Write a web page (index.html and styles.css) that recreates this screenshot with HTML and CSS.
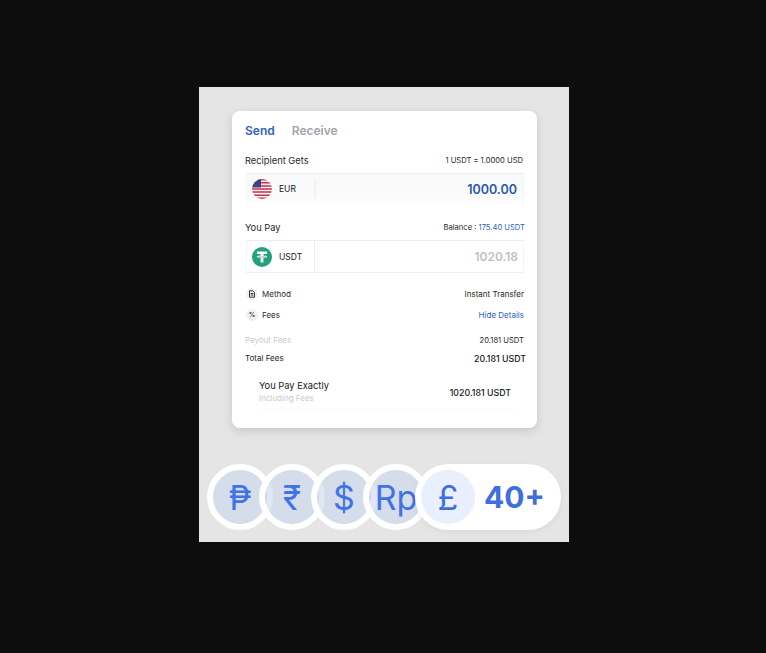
FILE: index.html
```html
<!DOCTYPE html>
<html>
<head>
  <title>Send</title>
  <link rel="stylesheet" href="styles.css">
</head>
<body>
  <div class="panel">
    <div class="card">
      <div class="tabs">
        <span class="tab active">Send</span>
        <span class="tab">Receive</span>
      </div>

      <div class="row label-row">
        <span class="label">Recipient Gets</span>
        <span class="small">1 USDT = 1.0000 USD</span>
      </div>
      <div class="amount-box faded">
        <div class="currency">
          <svg class="coin" viewBox="0 0 20 20">
            <defs><clipPath id="flag"><circle cx="10" cy="10" r="10"/></clipPath></defs>
            <g clip-path="url(#flag)">
              <rect width="20" height="20" fill="#f3f3f5"/>
              <path d="M0 .8h20M0 3.8h20M0 6.9h20M0 10h20M0 13.1h20M0 16.2h20M0 19.2h20" stroke="#c8324a" stroke-width="1.54"/>
              <rect width="9" height="8.5" fill="#3f4480"/>
            </g>
          </svg>
          <span>EUR</span>
        </div>
        <div class="amount blue">1000.00</div>
      </div>

      <div class="row label-row pay-row">
        <span class="label">You Pay</span>
        <span class="small balance">Balance : <em>175.40 USDT</em></span>
      </div>
      <div class="amount-box">
        <div class="currency divided">
          <svg class="coin" viewBox="0 0 20 20">
            <circle cx="10" cy="10" r="10" fill="#26a17b"/>
            <path d="M5 4.6h10v2.5h-3.6v1.5c2 .1 3.9.5 3.9 1.1s-1.9 1-3.900 1.100v4.700H8.600v-4.700c-2-.1-3.900-.5-3.900-1.100s1.900-1 3.900-1.100V7.100H5z" fill="#fff"/>
            <path d="M5.600 9.700c1 .5 7.800.5 8.800 0" fill="none" stroke="#26a17b" stroke-width=".6"/>
          </svg>
          <span>USDT</span>
        </div>
        <div class="amount grey">1020.18</div>
      </div>

      <div class="row info-row method-row">
        <span class="info-name">
          <span class="info-icon">
            <svg viewBox="0 0 8 8" width="8" height="8"><path d="M1.500.8h3.300l1.700 1.700v4.700h-5zM2.700 3.500h2.600M2.700 5h2.600" fill="none" stroke="#333" stroke-width="1"/></svg>
          </span>
          Method
        </span>
        <span class="small">Instant Transfer</span>
      </div>
      <div class="row info-row fees-row">
        <span class="info-name"><span class="info-icon">%</span>Fees</span>
        <span class="small link">Hide Details</span>
      </div>

      <div class="row payout-row">
        <span class="muted">Payout Fees</span>
        <span class="small">20.181 USDT</span>
      </div>
      <div class="row total-row">
        <span class="small">Total Fees</span>
        <span class="total-value">20.181 USDT</span>
      </div>

      <div class="exact">
        <div>
          <div class="exact-title">You Pay Exactly</div>
          <div class="muted">Including Fees</div>
        </div>
        <div class="exact-value">1020.181 USDT</div>
      </div>
      <div class="exact-rule"></div>
    </div>

    <div class="currencies">
      <div class="bubble"><span>₱</span></div>
      <div class="bubble"><span>₹</span></div>
      <div class="bubble"><span>$</span></div>
      <div class="bubble"><span>Rp</span></div>
      <div class="more">
        <span class="more-coin">£</span>
        <span class="more-count">40+</span>
      </div>
    </div>
  </div>
</body>
</html>
```

FILE: styles.css
```css
html, body {
  height: 100%;
}

body {
  background-color: #0d0d0d;
  margin: 0;
  padding: 87px 0 0 199px;
  box-sizing: border-box;
  font-family: "Inter", "Liberation Sans", sans-serif;
  color: #17181c;
}

.panel {
  width: 370px;
  height: 455px;
  background-color: #e5e5e5;
  padding-top: 24px;
  box-sizing: border-box;
  overflow: hidden;
}

.card {
  width: 305px;
  height: 317px;
  margin-left: 33px;
  padding: 12px 13px 0 13px;
  box-sizing: border-box;
  background-color: #ffffff;
  border-radius: 8px;
  box-shadow: 0 3px 10px rgba(0, 0, 0, 0.13);
}

.tabs {
  display: flex;
  gap: 17px;
  height: 15px;
  line-height: 15px;
  font-size: 12px;
  font-weight: 600;
}

.tab {
  color: #a3a5aa;
}

.tab.active {
  color: #2f62c0;
}

.row {
  display: flex;
  justify-content: space-between;
  align-items: center;
}

.label-row {
  height: 14px;
  margin-top: 15px;
  padding-right: 1px;
}

.pay-row {
  margin-top: 14px;
  padding-right: 0;
  margin-right: -1px;
}

.label {
  font-size: 9.3px;
  color: #26272b;
}

.small {
  font-size: 7.6px;
  color: #1e1f23;
}

.balance {
  margin-top: 1px;
}

.balance em {
  font-style: normal;
  color: #2f62c0;
}

.link {
  color: #2f62c0;
}

.amount-box {
  display: flex;
  justify-content: space-between;
  align-items: center;
  height: 33px;
  margin: 6px 0 0 1px;
  padding: 0 6px 0 5px;
  border-top: 1px solid #ebedef;
  border-bottom: 1px solid #f0f1f3;
  border-left: 1px solid #f3f4f5;
  border-right: 1px solid #f3f4f5;
  box-sizing: border-box;
}

.amount-box.faded {
  padding-bottom: 2px;
  background: linear-gradient(#f8f9fa, #fbfbfc 70%, #ffffff);
  border-bottom: none;
}

.currency {
  display: flex;
  align-items: center;
  gap: 7px;
  height: 100%;
  width: 62px;
  font-size: 8.5px;
}

.currency.divided {
  border-right: 1px solid #eceef0;
}

.faded .currency {
  height: 60%;
  border-right: 2px solid #f1f2f3;
}

.coin {
  width: 20px;
  height: 20px;
  flex: none;
}

.amount {
  font-size: 12.5px;
  font-weight: 600;
}

.amount.blue {
  color: #2a57ad;
}

.amount.grey {
  font-size: 12px;
  margin-right: -1px;
  color: #bcc1c8;
}

.info-row {
  height: 14px;
  margin-left: 1px;
}

.method-row {
  margin-top: 14px;
}

.fees-row {
  margin-top: 7px;
}

.info-name {
  display: flex;
  align-items: center;
  gap: 4px;
  font-size: 8px;
  color: #2a2b2f;
}

.info-icon {
  display: flex;
  align-items: center;
  justify-content: center;
  width: 12px;
  height: 12px;
  border-radius: 50%;
  background-color: #f1f1f2;
  font-size: 6.5px;
  font-weight: 600;
}

.fees-row .small,
.method-row .small {
  font-size: 8px;
}

.muted {
  font-size: 8px;
  color: #c9cacc;
}

.payout-row {
  height: 12px;
  margin-top: 12px;
}

.total-row {
  height: 14px;
  margin-top: 5px;
  margin-right: -2px;
}

.total-row .small {
  font-size: 8px;
}

.total-value {
  font-size: 8.8px;
  font-weight: 500;
  color: #17181c;
}

.exact {
  display: flex;
  justify-content: space-between;
  align-items: center;
  margin-top: 15px;
  padding: 0 13px 0 14px;
}

.exact-title {
  font-size: 9.3px;
  line-height: 12px;
  margin-bottom: 1px;
}

.exact-value {
  margin-top: 1px;
  font-size: 8.8px;
  font-weight: 500;
}

.exact-rule {
  height: 1px;
  margin: 6px 6px 0 17px;
  background-color: #fafafa;
}

.currencies {
  display: flex;
  margin: 36px 0 0 8px;
}

.bubble {
  display: flex;
  align-items: center;
  justify-content: center;
  flex: none;
  width: 54px;
  height: 54px;
  border: 6px solid #ffffff;
  border-radius: 50%;
  background-color: rgba(202, 214, 237, 0.6);
  background-clip: padding-box;
  color: #3f73e6;
  font-size: 34px;
  margin-right: -14px;
  overflow: hidden;
}

.bubble span {
  white-space: nowrap;
}

.more {
  display: flex;
  align-items: center;
  flex: none;
  position: relative;
  width: 146px;
  height: 66px;
  padding-left: 6px;
  box-sizing: border-box;
  border-radius: 33px;
  background-color: #ffffff;
  box-shadow: 0 2px 6px rgba(0, 0, 0, 0.05);
}

.more-coin {
  display: flex;
  align-items: center;
  justify-content: center;
  width: 54px;
  height: 54px;
  border-radius: 50%;
  background-color: #e9effc;
  color: #3f6fdc;
  font-size: 34px;
}

.more-count {
  margin-left: 9px;
  color: #3f6fdc;
  font-size: 30px;
  font-weight: 700;
}
```
